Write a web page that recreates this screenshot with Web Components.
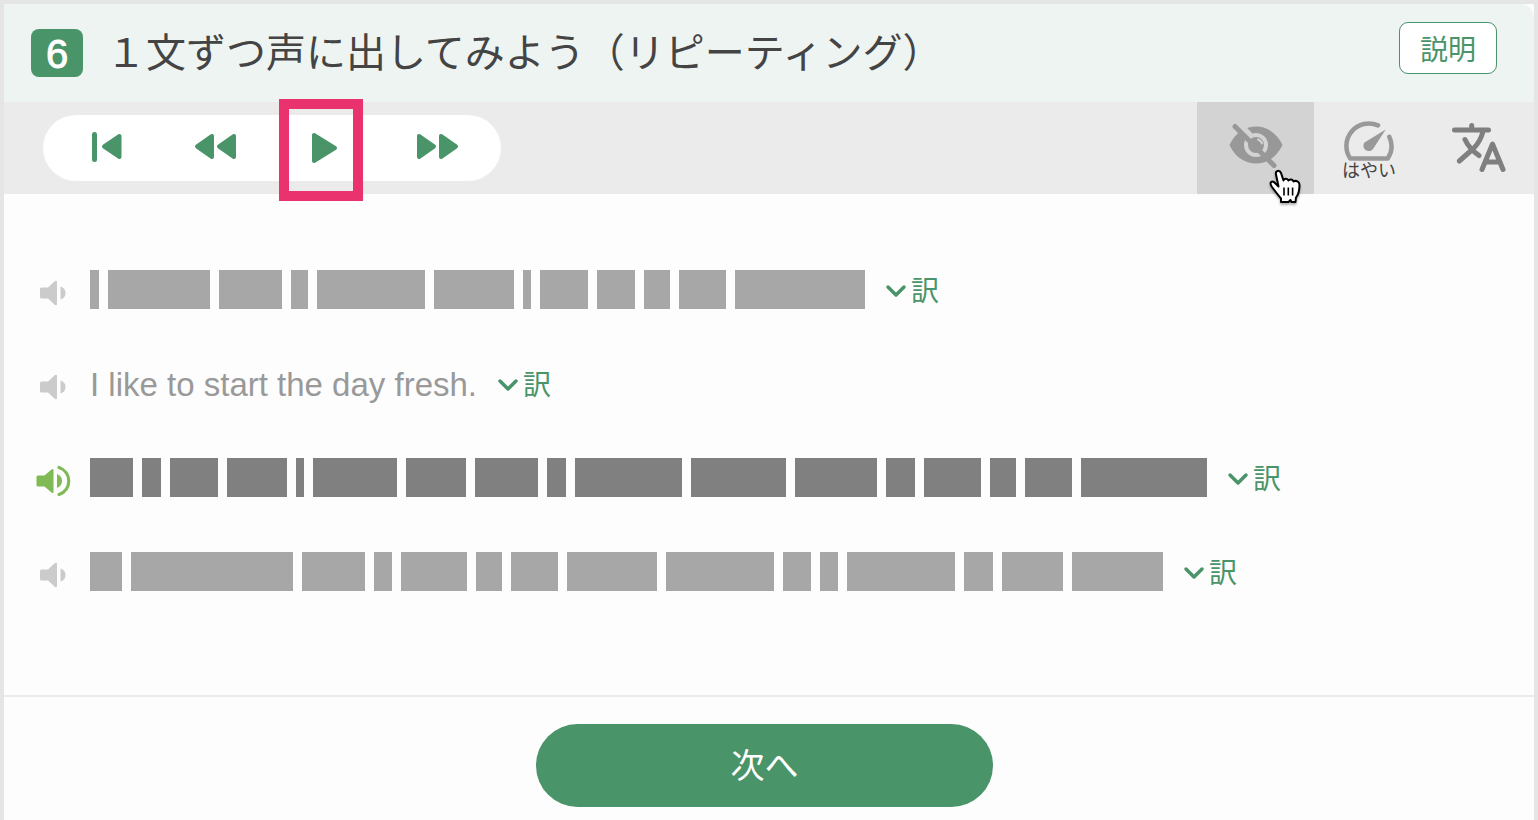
<!DOCTYPE html>
<html lang="ja">
<head>
<meta charset="utf-8">
<title>リピーティング</title>
<style>
  body {
    margin: 0;
    background: #e6e5e5;
    font-family: "Liberation Sans", "Noto Sans CJK JP", sans-serif;
  }
</style>
</head>
<body>
<lesson-page>
  <lesson-header slot="header" number="6">１文ずつ声に出してみよう（リピーティング）</lesson-header>
  <player-toolbar slot="toolbar"></player-toolbar>
  <sentence-row words="9 102 63 17 108 80 8 48 38 26 47 130"></sentence-row>
  <sentence-row>I like to start the day fresh.</sentence-row>
  <sentence-row active words="43 19 48 60 8 84 60 63 19 107 95 82 29 57 26 47 126"></sentence-row>
  <sentence-row words="32 162 63 18 66 26 47 90 108 28 18 108 29 61 91"></sentence-row>
  <next-button slot="footer">次へ</next-button>
</lesson-page>

<script>
const define = (name, html, setup) => {
  const template = document.createElement('template');
  template.innerHTML = html;
  customElements.define(name, class extends HTMLElement {
    constructor() {
      super();
      this.attachShadow({ mode: 'open' });
    }

    connectedCallback() {
      if (this.shadowRoot.firstChild) return;
      this.shadowRoot.appendChild(template.content.cloneNode(true));
      if (setup) setup(this, this.shadowRoot);
    }
  });
};

define('lesson-page', /*html*/`
  <style>
    :host {
      --green: #4a9469;
      display: flex;
      flex-direction: column;
      box-sizing: border-box;
      min-height: 100vh;
      padding: 4px 4px 0;
    }
    article {
      flex: 1;
      display: flex;
      flex-direction: column;
      background: #fdfdfd;
    }
    main {
      flex: 1;
      padding: 48px 30px 0;
    }
    footer {
      display: flex;
      justify-content: center;
      padding: 27px 9px 13px 0;
      border-top: 2px solid #ebebeb;
    }
  </style>
  <article>
    <slot name="header"></slot>
    <slot name="toolbar"></slot>
    <main><slot></slot></main>
    <footer><slot name="footer"></slot></footer>
  </article>`);

define('lesson-header', /*html*/`
  <style>
    :host {
      display: flex;
      align-items: center;
      height: 98px;
      padding: 0 37px 0 27px;
      background: #eef4f2;
      border-top-right-radius: 14px;
      color: #444;
    }
    .number {
      width: 52px;
      height: 48px;
      border-radius: 8px;
      background: var(--green);
      color: #fff;
      font-size: 40px;
      line-height: 50px;
      text-align: center;
      -webkit-text-stroke: 1px #fff;
    }
    h1 {
      flex: 1;
      margin: 0 0 0 23px;
      font-size: 40px;
      line-height: 60px;
      font-weight: 400;
      white-space: nowrap;
    }
    button {
      width: 98px;
      height: 52px;
      margin-bottom: 10px;
      padding: 0;
      border: 1px solid var(--green);
      border-radius: 9px;
      background: #fff;
      color: var(--green);
      font: inherit;
      font-size: 28px;
    }
  </style>
  <span class="number"></span>
  <h1><slot></slot></h1>
  <button type="button">説明</button>`, (host, root) => {
  root.querySelector('.number').textContent = host.getAttribute('number');
});

define('icon-button', /*html*/`
  <style>
    :host { display: flex; }
    button {
      flex: 1;
      display: flex;
      flex-direction: column;
      align-items: center;
      justify-content: center;
      padding: 0;
      border: 0;
      background: none;
      color: inherit;
      font: inherit;
    }
  </style>
  <button type="button"><slot></slot></button>`, (host, root) => {
  const label = host.getAttribute('label');
  if (label) root.querySelector('button').setAttribute('aria-label', label);
});

define('hand-pointer', /*html*/`
  <style>
    :host {
      display: block;
      filter: drop-shadow(0 2px 1px rgba(0, 0, 0, .3));
      pointer-events: none;
    }
    svg { display: block; }
  </style>
  <svg width="36" height="40">
    <path d="M8 6.5C7 2.5 11.500 1.5 13 5L15.5 12.5C16.5 10 19.5 10.500 20.5 12.5C22 10.5 25 11.5 25.5 13.5C28 12 31.5 13.500 31.5 17C31.5 23 30 27 28 29.5L27.5 34H23.5L22.5 32 20.5 34H13V30.5C10 27 7 23 4 19C0.5 13.5 4.5 12 7.5 15.500L10.5 18.5z"
      fill="#fff" stroke="#000" stroke-width="2" stroke-linejoin="round"/>
    <path d="M16 19.5v8M20.300 19.5v8M24.600 19.5v8" stroke="#000" stroke-width="1.6"/>
  </svg>`);

define('player-toolbar', /*html*/`
  <style>
    :host {
      display: flex;
      justify-content: space-between;
      align-items: stretch;
      height: 92px;
      padding-left: 39px;
      background: #ebebeb;
    }
    svg { display: block; }
    .player {
      display: flex;
      align-self: center;
      height: 66px;
      padding: 0 9px;
      border-radius: 33px;
      background: #fff;
      color: var(--green);
    }
    .player icon-button { width: 110px; }
    .player svg {
      fill: currentColor;
      stroke: currentColor;
      stroke-width: 4;
      stroke-linejoin: round;
      stroke-linecap: round;
    }
    .play { position: relative; }
    .play::after {
      content: "";
      position: absolute;
      left: 7px;
      top: -16px;
      width: 64px;
      height: 82px;
      border: 10px solid #e9326e;
      pointer-events: none;
    }
    .tools {
      display: flex;
      color: #7f7f7f;
    }
    .tools icon-button { width: 110px; }
    .tools .hide {
      position: relative;
      width: 117px;
      background: #d3d3d3;
      color: #989898;
    }
    .speed {
      font-size: 18px;
      line-height: 20px;
    }
    .speed svg {
      margin-top: 6px;
      color: #999;
    }
    .speed span { color: #444; }
    hand-pointer {
      position: absolute;
      left: 71px;
      top: 66px;
    }
  </style>
  <div class="player">
    <icon-button label="最初から">
      <svg width="60" height="40"><path d="M17.5 6.5V31.5" stroke-width="5"/><path d="M27 18.5 42.5 8v21z"/></svg>
    </icon-button>
    <icon-button label="前の文">
      <svg width="60" height="40"><path d="M10 18.5 25 8v21zM32 18.5 47 8v21z"/></svg>
    </icon-button>
    <icon-button class="play" label="再生">
      <svg width="60" height="40"><path d="M17 7v26L38 20z"/></svg>
    </icon-button>
    <icon-button label="次の文">
      <svg width="60" height="40"><path d="M12 8v21L27 18.5zM34 8v21L49 18.5z"/></svg>
    </icon-button>
  </div>
  <div class="tools">
    <icon-button class="hide" label="英文をかくす">
      <svg width="60" height="50" fill="none" stroke-linecap="round">
        <path d="M3.5 22C9 10 19 3.5 30 3.5S51 10 56.5 22C51 34 41 40.5 30 40.5S9 34 3.500 22z" fill="currentColor"/>
        <circle cx="30" cy="22" r="10" stroke="#d3d3d3" stroke-width="4"/>
        <path d="M32 16.5q3.500 1.500 4 4" stroke="#d3d3d3" stroke-width="2"/>
        <path d="M13 1 23 11" stroke="#d3d3d3" stroke-width="6"/>
        <path d="M9 3.5 48 42.5" stroke="currentColor" stroke-width="5"/>
      </svg>
      <hand-pointer></hand-pointer>
    </icon-button>
    <icon-button class="speed">
      <svg width="54" height="40" fill="none" stroke="currentColor" stroke-width="4.5" stroke-linecap="round" stroke-linejoin="round">
        <path d="M36 4.4A22.5 22.5 0 0 0 8.2 37.5H45.8A22.5 22.5 0 0 0 47.3 15.8"/>
        <path d="M43.700 8.500 31 28A5.300 5.300 0 1 1 22.5 21.5z" fill="currentColor" stroke="none"/>
      </svg>
      <span>はやい</span>
    </icon-button>
    <icon-button label="翻訳">
      <svg width="56" height="56" fill="none" stroke="currentColor" stroke-width="5" stroke-linecap="round" stroke-linejoin="round">
        <path d="M3.5 10H37.5M20.7 5.500V10M32.3 10.500Q29.5 21.5 22.5 28.500L8.300 41M14 19.500Q18 28.5 28 35.5"/>
        <path d="M31 49.500 41.5 24 52 49.500M34.5 42H48.5"/>
      </svg>
    </icon-button>
  </div>`);

define('sentence-row', /*html*/`
  <style>
    :host {
      --word: #a7a7a7;
      display: flex;
      align-items: center;
      height: 94px;
    }
    :host([active]) { --word: #808080; }
    .sound {
      width: 40px;
      margin: 8px 16px 0 0;
      color: #cbcbcb;
    }
    :host([active]) .sound { color: #7fba55; }
    svg {
      display: block;
      stroke-linecap: round;
      stroke-linejoin: round;
    }
    .loud, :host([active]) .quiet { display: none; }
    :host([active]) .loud { display: block; }
    .text {
      display: flex;
      gap: 9px;
      color: #999;
      font-size: 33px;
      line-height: 40px;
      white-space: nowrap;
    }
    .text span { padding-top: 4px; }
    .text i {
      height: 39px;
      background: var(--word);
    }
    .translate {
      display: flex;
      align-items: center;
      gap: 4px;
      margin: 2px 0 0 20px;
      padding: 0;
      border: 0;
      background: none;
      color: var(--green);
      font: inherit;
      font-size: 28px;
      line-height: 40px;
    }
    .translate span { padding-top: 4px; }
  </style>
  <icon-button class="sound" label="音声を聞く">
    <svg class="quiet" width="40" height="40" fill="currentColor">
      <path d="M7.5 14.5H14L21 8Q23 7 23 9V31Q23 33 21 32L14 25.5H7.5Q6 25.5 6 24V16Q6 14.5 7.5 14.5zM26.5 13.5Q31.5 15 31.5 20T26.5 26.5z"/>
    </svg>
    <svg class="loud" width="40" height="40" fill="currentColor">
      <path d="M4 14.5H10.5L17.5 8.5Q19.5 7 19.5 9.5V30.5Q19.5 33 17.5 31.5L10.5 25.5H4Q2.5 25.5 2.5 24V16Q2.5 14.5 4 14.5zM23 13Q28 15 28 20T23 27z"/>
      <path d="M25 6.5C38 11 38 29 25 33.5" fill="none" stroke="currentColor" stroke-width="3.2"/>
    </svg>
  </icon-button>
  <div class="text"><span><slot></slot></span></div>
  <button class="translate" type="button">
    <svg width="22" height="20" fill="none" stroke="currentColor" stroke-width="3.5"><path d="M3 7 11 15 19 7"/></svg>
    <span>訳</span>
  </button>`, (host, root) => {
  // hidden sentences show one block per word
  const words = host.getAttribute('words');
  if (!words) return;
  const blocks = words.split(' ').map(width => {
    const block = document.createElement('i');
    block.style.width = `${width}px`;
    return block;
  });
  root.querySelector('.text').replaceChildren(...blocks);
});

define('next-button', /*html*/`
  <style>
    :host {
      display: block;
      width: 30%;
    }
    button {
      width: 100%;
      height: 83px;
      padding: 0 0 4px;
      border: 0;
      border-radius: 42px;
      background: var(--green);
      color: #fff;
      font: inherit;
      font-size: 34px;
    }
  </style>
  <button type="button"><slot></slot></button>`);
</script>
</body>
</html>
